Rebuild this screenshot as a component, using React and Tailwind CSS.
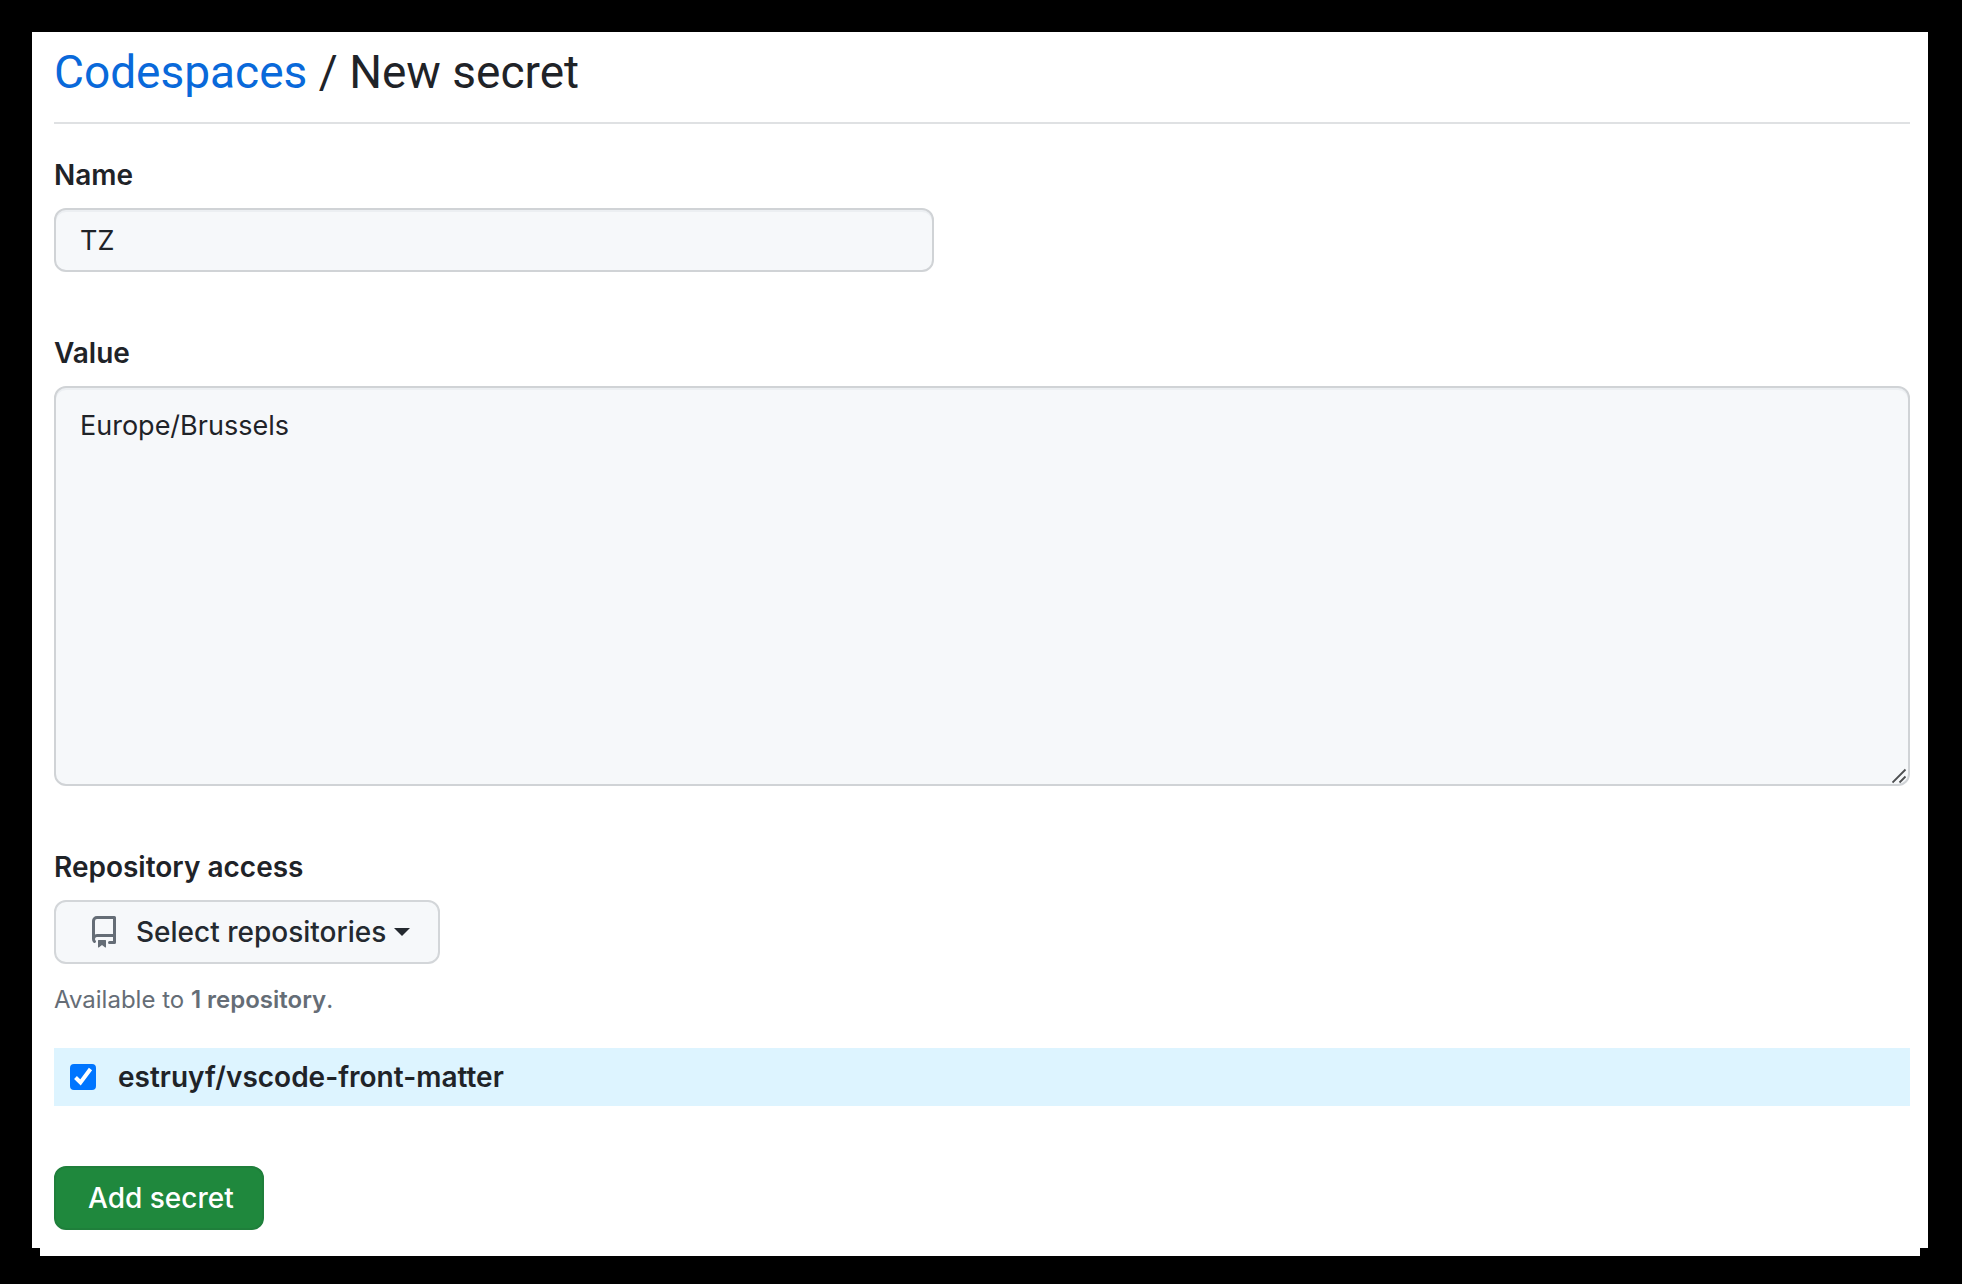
import { useState } from "react";

const labelClass = "block text-[28px] leading-[42px] font-semibold";
const fieldClass =
  "block rounded-xl border-2 border-[#d0d3d6] bg-[#f6f8fa] px-6 text-[27px] leading-10 shadow-[inset_0_2px_0_#eceff2] outline-none";

function RepoIcon() {
  return (
    <svg className="size-8 fill-[#656d76]" viewBox="0 0 16 16" aria-hidden="true">
      <path d="M2 2.5A2.5 2.5 0 0 1 4.5 0h8.75a.75.75 0 0 1 .75.75v12.5a.75.75 0 0 1-.75.75h-2.5a.75.75 0 0 1 0-1.5h1.75v-2h-8a1 1 0 0 0-.714 1.7.75.75 0 1 1-1.072 1.05A2.495 2.495 0 0 1 2 11.5Zm10.5-1h-8a1 1 0 0 0-1 1v6.708A2.486 2.486 0 0 1 4.5 9h8ZM5 12.25a.25.25 0 0 1 .25-.25h3.5a.25.25 0 0 1 .25.25v3.25a.25.25 0 0 1-.4.2l-1.45-1.087a.249.249 0 0 0-.3 0L5.4 15.7a.25.25 0 0 1-.4-.2Z" />
    </svg>
  );
}

export default function App() {
  const [name, setName] = useState("TZ");
  const [value, setValue] = useState("Europe/Brussels");
  const [checked, setChecked] = useState(true);

  return (
    <div className="min-h-screen bg-black pt-8 pr-[34px] pb-7 pl-8 font-['Inter','Liberation_Sans',sans-serif] text-[#1f2328]">
      <main className="bg-white pr-[18px] pb-[18px] pl-[22px]">
        <h1 className="border-b-2 border-[#dfe1e3] pt-2 pb-[18px] font-['Roboto','Inter',sans-serif] text-[46px] leading-[64px] font-normal">
          <a href="#codespaces" className="text-[#0969da]">
            Codespaces
          </a>{" "}
          / New secret
        </h1>

        <form onSubmit={(e) => e.preventDefault()}>
          <div className="pt-[30px]">
            <label htmlFor="name" className={labelClass}>
              Name
            </label>
            <input
              id="name"
              type="text"
              value={name}
              onChange={(e) => setName(e.target.value)}
              className={`${fieldClass} mt-3 h-16 w-full max-w-[880px]`}
            />
          </div>

          <div className="pt-[60px]">
            <label htmlFor="value" className={labelClass}>
              Value
            </label>
            <div className="relative mt-3">
              <textarea
                id="value"
                value={value}
                onChange={(e) => setValue(e.target.value)}
                className={`${fieldClass} h-[400px] w-full resize-none py-[18px]`}
              />
              <svg
                className="pointer-events-none absolute right-0.5 bottom-0.5 size-4 stroke-[#4d4f51]"
                viewBox="0 0 16 16"
                strokeWidth="1.8"
                aria-hidden="true"
              >
                <path d="M0.5 14.5 13.5 1.5M7.5 14.5 13.5 8.5" />
              </svg>
            </div>
          </div>

          <div className="pt-[60px]">
            <h2 className={labelClass}>Repository access</h2>
            <button
              type="button"
              className="mt-3 flex h-16 items-center rounded-xl border-2 border-[#d3d6d9] bg-[#f6f8fa] pr-7 pl-8 text-[28px] leading-10 font-medium text-[#24292f]"
            >
              <RepoIcon />
              <span className="ml-4">Select repositories</span>
              <svg className="ml-2 h-2 w-4 fill-current" viewBox="0 0 16 8" aria-hidden="true">
                <path d="M0 0h16L8 8z" />
              </svg>
            </button>
            <p className="mt-[18px] text-2xl leading-9 text-[#656d76]">
              Available to <strong className="font-semibold">1 repository</strong>.
            </p>
          </div>

          <label className="mt-[30px] flex h-[58px] items-center bg-[#ddf4ff] px-4 text-[28px] leading-10 font-semibold">
            <span className="relative size-[26px]">
              <input
                type="checkbox"
                checked={checked}
                onChange={(e) => setChecked(e.target.checked)}
                className="peer block size-full appearance-none rounded-[4px] border-2 border-[#767676] bg-white checked:border-[#0075ff] checked:bg-[#0075ff]"
              />
              <svg
                className="pointer-events-none absolute inset-0 hidden size-full fill-none stroke-white peer-checked:block"
                viewBox="0 0 26 26"
                strokeWidth="4"
                aria-hidden="true"
              >
                <path d="m5.5 13.5 5 5L20.5 5" />
              </svg>
            </span>
            <span className="ml-[22px]">estruyf/vscode-front-matter</span>
          </label>

          <button
            type="submit"
            className="mt-[60px] block h-16 rounded-xl border-2 border-[#1f7f3b] bg-[#1f883d] pr-7 pl-8 text-[28px] leading-10 font-medium text-white"
          >
            Add secret
          </button>
        </form>
      </main>
      <div className="mx-2 h-2 bg-white" />
    </div>
  );
}
